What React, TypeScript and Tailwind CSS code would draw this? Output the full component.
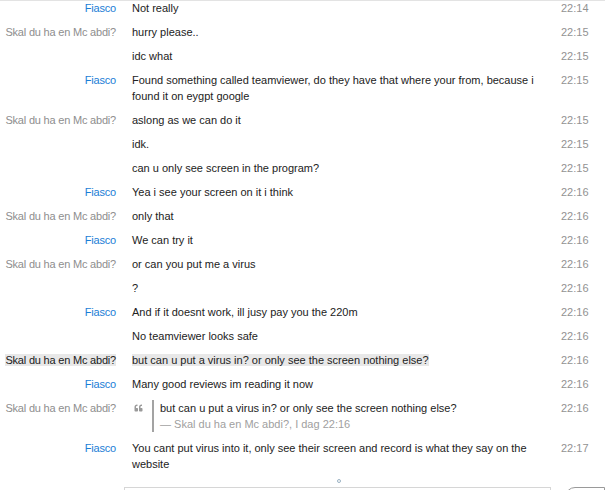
import { FaQuoteLeft } from 'react-icons/fa';

type Msg = {
    name?: string;
    me?: boolean;
    lines: string[];
    time: string;
    highlight?: boolean;
    quote?: { text: string; by: string };
};

const messages: Msg[] = [
    { name: 'Fiasco', me: true, lines: ['Not really'], time: '22:14' },
    { name: 'Skal du ha en Mc abdi?', lines: ['hurry please..'], time: '22:15' },
    { lines: ['idc what'], time: '22:15' },
    { name: 'Fiasco', me: true, lines: ['Found something called teamviewer, do they have that where your from, because i', 'found it on eygpt google'], time: '22:15' },
    { name: 'Skal du ha en Mc abdi?', lines: ['aslong as we can do it'], time: '22:15' },
    { lines: ['idk.'], time: '22:15' },
    { lines: ['can u only see screen in the program?'], time: '22:15' },
    { name: 'Fiasco', me: true, lines: ['Yea i see your screen on it i think'], time: '22:16' },
    { name: 'Skal du ha en Mc abdi?', lines: ['only that'], time: '22:16' },
    { name: 'Fiasco', me: true, lines: ['We can try it'], time: '22:16' },
    { name: 'Skal du ha en Mc abdi?', lines: ['or can you put me a virus'], time: '22:16' },
    { lines: ['?'], time: '22:16' },
    { name: 'Fiasco', me: true, lines: ['And if it doesnt work, ill jusy pay you the 220m'], time: '22:16' },
    { lines: ['No teamviewer looks safe'], time: '22:16' },
    { name: 'Skal du ha en Mc abdi?', lines: ['but can u put a virus in? or only see the screen nothing else?'], time: '22:16', highlight: true },
    { name: 'Fiasco', me: true, lines: ['Many good reviews im reading it now'], time: '22:16' },
    { name: 'Skal du ha en Mc abdi?', lines: [], time: '22:16', quote: { text: 'but can u put a virus in? or only see the screen nothing else?', by: '— Skal du ha en Mc abdi?, I dag 22:16' } },
    { name: 'Fiasco', me: true, lines: ['You cant put virus into it, only see their screen and record is what they say on the', 'website'], time: '22:17' },
];

const App = () => {
    return (
        <div className="w-[605px] h-[490px] overflow-hidden bg-white border-t border-[#e3e3e3] text-[11px] leading-4" style={{ fontFamily: '"Liberation Sans", Arial, sans-serif' }}>
            <div className="-mt-[5px]">
                {messages.map((m, i) => (
                    <div key={i} className="grid grid-cols-[116px_413px_44px] gap-x-4 py-1">
                        <div className="text-right whitespace-nowrap tracking-[-0.2px]">
                            {m.name && (
                                <span className={m.highlight ? 'bg-[#e8e8e8] text-[#1a1a1a]' : m.me ? 'text-[#1b7ed6]' : 'text-[#8e8e8e]'}>{m.name}</span>
                            )}
                        </div>
                        <div className="text-[#222] whitespace-nowrap">
                            {m.quote ? (
                                <div className="flex items-start">
                                    <FaQuoteLeft className="mt-[4px] ml-[1px] w-[11px] h-[8px] text-[#9a9a9a]" />
                                    <div className="ml-[8px] pl-[6px] border-l-2 border-[#a3a3a3]">
                                        <div>{m.quote.text}</div>
                                        <div className="text-[#a0a0a0]">{m.quote.by}</div>
                                    </div>
                                </div>
                            ) : (
                                m.lines.map((l, j) => (
                                    <div key={j}>
                                        <span className={m.highlight ? 'bg-[#e8e8e8]' : ''}>{l}</span>
                                    </div>
                                ))
                            )}
                        </div>
                        <div className="text-[#929292]">{m.time}</div>
                    </div>
                ))}
                <div className="flex flex-col">
                    <div className="h-[3px]"></div>
                    <div className="ml-[337px] w-[4px] h-[4px] rounded-full border border-[#9bb3c4]"></div>
                    <div className="flex items-start gap-[14px] mt-[4px]">
                        <div className="ml-[124px] w-[429px] h-[20px] border border-[#d6d6d6]"></div>
                        <div className="w-[40px] h-[20px] rounded-tl-[10px] border border-[#9a9a9a]"></div>
                    </div>
                </div>
            </div>
        </div>
    );
};

export default App;
